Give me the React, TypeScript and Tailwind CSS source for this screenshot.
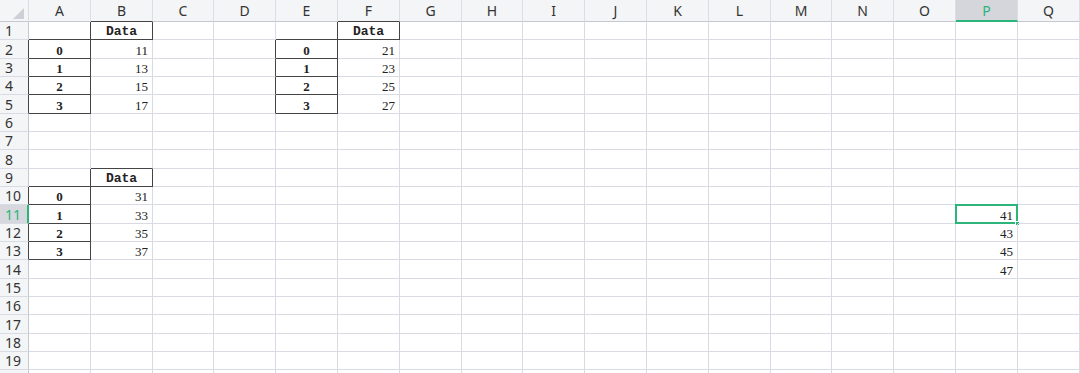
const COLS = ["A", "B", "C", "D", "E", "F", "G", "H", "I", "J", "K", "L", "M", "N", "O", "P", "Q"];
const ROWS = Array.from({ length: 20 }, (_, i) => i + 1);

type Cell = { v: string; kind: "head" | "index" | "num" };

const cells: Record<string, Cell> = {};
const boxed = new Set<string>();

const put = (r: number, c: number, v: string, kind: Cell["kind"], box = false) => {
  cells[`${r},${c}`] = { v, kind };
  if (box) boxed.add(`${r},${c}`);
};

// three frames written by to_excel, plus a bare column in P
const addFrame = (top: number, left: number, start: number) => {
  put(top, left + 1, "Data", "head", true);
  [0, 1, 2, 3].forEach((i) => {
    put(top + 1 + i, left, String(i), "index", true);
    put(top + 1 + i, left + 1, String(start + i * 2), "num");
  });
};
addFrame(1, 0, 11);
addFrame(1, 4, 21);
addFrame(9, 0, 31);
[41, 43, 45, 47].forEach((n, i) => put(11 + i, 15, String(n), "num"));

const isBox = (r: number, c: number) => boxed.has(`${r},${c}`);

const SEL_ROW = 11;
const SEL_COL = 15;

const CornerTriangle = () => (
  <svg width="11" height="11" viewBox="0 0 11 11" className="absolute left-[13px] top-[8px]">
    <polygon points="11,0 11,11 0,11" fill="#cdd0d6" />
  </svg>
);

export default function App() {
  return (
    <div className="w-[1080px] h-[373px] overflow-hidden bg-white">
      <div className="grid grid-cols-[29px_62px_62px_61px_62px_62px_62px_62px_61px_62px_62px_62px_62px_61px_62px_62px_62px_62px] grid-rows-[22px_18px_19px_18px_18px_19px_18px_18px_19px_18px_18px_19px_18px_18px_19px_18px_18px_19px_18px_18px_18px]">
        {/* header row */}
        <div className="relative bg-[#f4f5f7] border-r border-b border-r-[#dcdee5] border-b-[#c5c8d0]">
          <CornerTriangle />
        </div>
        {COLS.map((col, c) => {
          const sel = c === SEL_COL;
          const dark = isBox(1, c);
          return (
            <div
              key={col}
              className={`flex items-center justify-center text-[14px] border-r border-r-[#dcdee5] ${
                sel
                  ? "bg-[#d4d6dc] text-[#2bb57b] border-b-2 border-b-[#2bb57b]"
                  : dark
                    ? "bg-[#f4f5f7] text-[#333333] border-b border-b-[#444444]"
                    : "bg-[#f4f5f7] text-[#333333] border-b border-b-[#c5c8d0]"
              }`}
              style={{ fontFamily: '"Noto Sans", "Liberation Sans", sans-serif' }}
            >
              {col}
            </div>
          );
        })}

        {ROWS.map((r) => (
          <Row key={r} r={r} />
        ))}
      </div>
    </div>
  );
}

function Row({ r }: { r: number }) {
  const sel = r === SEL_ROW;
  const darkRight = isBox(r, 0);
  return (
    <>
      <div
        className={`flex items-center pl-[5px] text-[14px] border-b border-b-[#d8dbe4] ${
          sel
            ? "bg-[#d6d8dd] text-[#2bb57b] border-r-2 border-r-[#2bb57b]"
            : darkRight
              ? "bg-[#f4f5f7] text-[#333333] border-r border-r-[#444444]"
              : "bg-[#f4f5f7] text-[#333333] border-r border-r-[#c5c8d0]"
        }`}
        style={{ fontFamily: '"Noto Sans", "Liberation Sans", sans-serif' }}
      >
        {r < 20 ? r : ""}
      </div>
      {COLS.map((_, c) => {
        const cell = cells[`${r},${c}`];
        const right = isBox(r, c) || isBox(r, c + 1);
        const bottom = isBox(r, c) || isBox(r + 1, c);
        const selected = r === SEL_ROW && c === SEL_COL;
        return (
          <div
            key={c}
            className={`relative flex items-center border-r border-b ${right ? "border-r-[#444444]" : "border-r-[#d8dbe4]"} ${
              bottom ? "border-b-[#444444]" : "border-b-[#d8dbe4]"
            } ${
              cell?.kind === "num" ? "justify-end pr-[4px]" : "justify-center"
            } text-[13px] text-[#222222] leading-none pt-[2px]`}
          >
            {cell && (
              <span
                className={cell.kind === "num" ? "" : "font-bold"}
                style={{
                  fontFamily:
                    cell.kind === "head" ? '"Liberation Mono", monospace' : '"Liberation Serif", serif',
                }}
              >
                {cell.v}
              </span>
            )}
            {selected && (
              <div className="absolute -left-px -top-px right-[-1px] bottom-[-1px] border-2 border-[#2bb57b]">
                <div className="absolute -right-[4px] -bottom-[4px] w-[5px] h-[5px] bg-[#2bb57b] border border-white" />
              </div>
            )}
          </div>
        );
      })}
    </>
  );
}
